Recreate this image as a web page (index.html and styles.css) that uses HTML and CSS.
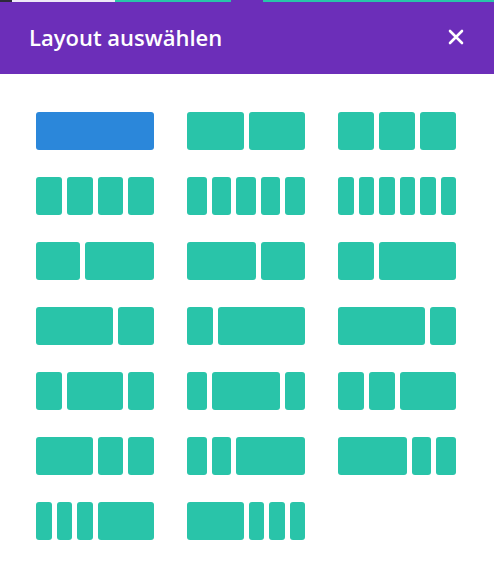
FILE: index.html
```html
<!DOCTYPE html>
<html lang="de">
<head>
<meta charset="utf-8">
<title>Layout auswählen</title>
<link rel="stylesheet" href="styles.css">
</head>
<body>
<div class="modal">
  <div class="topstrip">
    <span class="seg seg-dark"></span>
    <span class="seg seg-light"></span>
    <span class="seg seg-teal1"></span>
    <span class="seg seg-notch"></span>
    <span class="seg seg-teal2"></span>
  </div>
  <header class="header">
    <h1 class="title">Layout auswählen</h1>
    <button class="close" aria-label="Schließen">
      <svg width="16" height="16" viewBox="0 0 16 16"><path d="M2 2 L14 14 M14 2 L2 14" stroke="#fff" stroke-width="2.6" stroke-linecap="round" fill="none"/></svg>
    </button>
  </header>
  <div class="grid">
    <div class="layout"><span class="col f1 active"></span></div>
    <div class="layout"><span class="col f1-2"></span><span class="col f1-2"></span></div>
    <div class="layout"><span class="col f1-3"></span><span class="col f1-3"></span><span class="col f1-3"></span></div>

    <div class="layout"><span class="col f1-4"></span><span class="col f1-4"></span><span class="col f1-4"></span><span class="col f1-4"></span></div>
    <div class="layout"><span class="col f1-5"></span><span class="col f1-5"></span><span class="col f1-5"></span><span class="col f1-5"></span><span class="col f1-5"></span></div>
    <div class="layout"><span class="col f1-6"></span><span class="col f1-6"></span><span class="col f1-6"></span><span class="col f1-6"></span><span class="col f1-6"></span><span class="col f1-6"></span></div>

    <div class="layout"><span class="col f2-5"></span><span class="col f3-5"></span></div>
    <div class="layout"><span class="col f3-5"></span><span class="col f2-5"></span></div>
    <div class="layout"><span class="col f1-3"></span><span class="col f2-3"></span></div>

    <div class="layout"><span class="col f2-3"></span><span class="col f1-3"></span></div>
    <div class="layout"><span class="col f1-4"></span><span class="col f3-4"></span></div>
    <div class="layout"><span class="col f3-4"></span><span class="col f1-4"></span></div>

    <div class="layout"><span class="col f1-4"></span><span class="col f1-2"></span><span class="col f1-4"></span></div>
    <div class="layout"><span class="col f1-5"></span><span class="col f3-5"></span><span class="col f1-5"></span></div>
    <div class="layout"><span class="col f1-4"></span><span class="col f1-4"></span><span class="col f1-2"></span></div>

    <div class="layout"><span class="col f1-2"></span><span class="col f1-4"></span><span class="col f1-4"></span></div>
    <div class="layout"><span class="col f1-5"></span><span class="col f1-5"></span><span class="col f3-5"></span></div>
    <div class="layout"><span class="col f3-5"></span><span class="col f1-5"></span><span class="col f1-5"></span></div>

    <div class="layout"><span class="col f1-6"></span><span class="col f1-6"></span><span class="col f1-6"></span><span class="col f1-2"></span></div>
    <div class="layout"><span class="col f1-2"></span><span class="col f1-6"></span><span class="col f1-6"></span><span class="col f1-6"></span></div>
  </div>
</div>
</body>
</html>
```
FILE: styles.css
```css
* { box-sizing: border-box; }
html, body { margin: 0; padding: 0; background: #ffffff; }
body { width: 494px; height: 581px; overflow: hidden; font-family: "Open Sans", "Noto Sans", sans-serif; }

.modal { width: 494px; height: 581px; background: #ffffff; position: relative; }

.topstrip { display: flex; height: 2px; background: #6c2eb9; }
.seg { display: block; height: 2px; }
.seg-dark { width: 12px; background: #2d2a3a; }
.seg-light { width: 103px; background: #efe9f7; }
.seg-teal1 { width: 116px; background: #29c4a9; }
.seg-notch { width: 32px; background: #6c2eb9; }
.seg-teal2 { flex: 1; background: #29c4a9; }

.header {
  height: 72px;
  background: #6c2eb9;
  display: flex;
  align-items: center;
  justify-content: space-between;
  padding: 0 30px 0 29px;
}
.title {
  margin: 0;
  color: #ffffff;
  font-family: "Open Sans", sans-serif;
  font-weight: 600;
  font-size: 22px;
  letter-spacing: 0;
  line-height: 1;
  padding-bottom: 3px;
}
.close {
  border: 0;
  background: transparent;
  padding: 0;
  width: 16px;
  height: 16px;
  display: flex;
  margin-bottom: 2px;
}

.grid {
  display: grid;
  grid-template-columns: repeat(3, 118px);
  column-gap: 33px;
  row-gap: 27px;
  padding: 38px 0 0 36px;
}
.layout { display: flex; gap: 5px; height: 38px; }
.col { display: block; height: 38px; background: #29c4a9; border-radius: 3px; }
.col.active { background: #2b87da; }

.f1 { width: 100%; }
.f1-2 { width: calc((100% + 5px) * 0.5 - 5px); }
.f1-3 { width: calc((100% + 5px) / 3 - 5px); }
.f2-3 { width: calc((100% + 5px) * 2 / 3 - 5px); }
.f1-4 { width: calc((100% + 5px) * 0.25 - 5px); }
.f3-4 { width: calc((100% + 5px) * 0.75 - 5px); }
.f1-5 { width: calc((100% + 5px) * 0.2 - 5px); }
.f2-5 { width: calc((100% + 5px) * 0.4 - 5px); }
.f3-5 { width: calc((100% + 5px) * 0.6 - 5px); }
.f1-6 { width: calc((100% + 5px) / 6 - 5px); }
```
